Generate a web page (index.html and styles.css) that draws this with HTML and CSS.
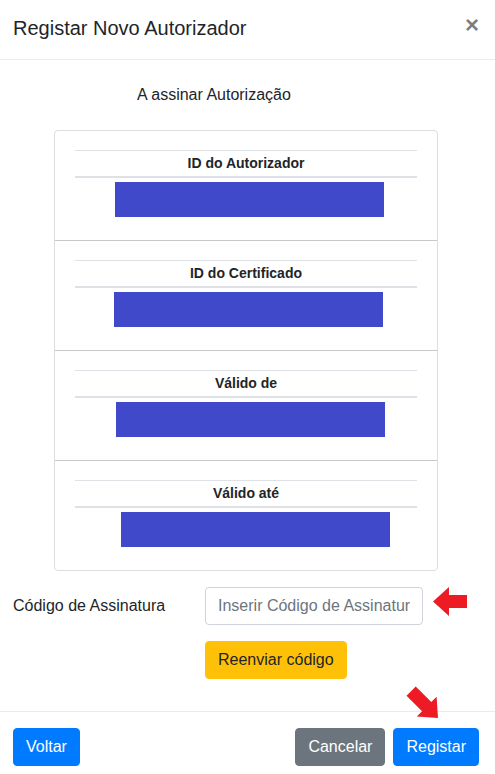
FILE: index.html
```html
<!DOCTYPE html>
<html lang="pt">
<head>
<meta charset="utf-8">
<title>Registar Novo Autorizador</title>
<link rel="stylesheet" href="styles.css">
</head>
<body>
<div class="modal">
  <header class="modal-header">
    <h5 class="modal-title">Registar Novo Autorizador</h5>
    <button class="close" type="button" aria-label="Fechar">×</button>
  </header>
  <div class="modal-body">
    <p class="subtitle">A assinar Autorização</p>
    <div class="card">
      <section class="card-section">
        <div class="field-label">ID do Autorizador</div>
        <div class="field-value"><div class="redact redact-1"></div></div>
      </section>
      <section class="card-section">
        <div class="field-label">ID do Certificado</div>
        <div class="field-value"><div class="redact redact-2"></div></div>
      </section>
      <section class="card-section">
        <div class="field-label">Válido de</div>
        <div class="field-value"><div class="redact redact-3"></div></div>
      </section>
      <section class="card-section">
        <div class="field-label">Válido até</div>
        <div class="field-value"><div class="redact redact-4"></div></div>
      </section>
    </div>
    <div class="form-row">
      <label class="form-label" for="code">Código de Assinatura</label>
      <input class="form-control" id="code" type="text" placeholder="Inserir Código de Assinatura">
    </div>
    <div class="resend-row">
      <button class="btn btn-warning" type="button">Reenviar código</button>
    </div>
  </div>
  <footer class="modal-footer">
    <button class="btn btn-primary" type="button">Voltar</button>
    <div class="footer-right">
      <button class="btn btn-secondary" type="button">Cancelar</button>
      <button class="btn btn-primary" type="button">Registar</button>
    </div>
  </footer>
  <svg class="arrow arrow-left" viewBox="428 584 42 34" width="42" height="34" aria-hidden="true">
    <polygon points="433,601.5 449,587 449,595 467,595 467,608 449,608 449,616" fill="#ed1c24"/>
  </svg>
  <svg class="arrow arrow-diag" viewBox="400 680 45 45" width="45" height="45" aria-hidden="true">
    <polygon points="415.7,686.5 431.3,702.1 436.6,696.8 438,718 416.8,716.6 422.1,711.3 406.5,695.7" fill="#ed1c24"/>
  </svg>
</div>
</body>
</html>
```

FILE: styles.css
```css
html, body {
  margin: 0;
  padding: 0;
  overflow: hidden;
  background: #fff;
}

body {
  font-family: "Liberation Sans", Arial, sans-serif;
  font-size: 16px;
  line-height: 24px;
  color: #212529;
}

.modal {
  position: relative;
  width: 495px;
  background: #fff;
}

.modal-header {
  display: flex;
  align-items: flex-start;
  padding: 13px 16px 16px 13px;
  border-bottom: 1px solid #e9ecef;
}

.modal-title {
  margin: 0;
  font-size: 20px;
  font-weight: 400;
  line-height: 30px;
  color: #212529;
}

.close {
  margin-left: auto;
  padding: 0;
  border: 0;
  background: transparent;
  font-family: "Liberation Sans", Arial, sans-serif;
  font-size: 24px;
  font-weight: 700;
  line-height: 1;
  color: #000;
  opacity: 0.5;
  text-shadow: 0 1px 0 #fff;
  cursor: pointer;
}

.modal-body {
  padding: 16px 16px 32px 13px;
}

.subtitle {
  margin: 0 0 23px;
  padding: 7px 0 0 124px;
  line-height: 24px;
}

.card {
  width: 382px;
  margin: 0 auto;
  border: 1px solid #dddddd;
  border-radius: 4px;
}

.card-section {
  padding: 19px 20px 20px;
  border-bottom: 1px solid #c9c9c9;
}

.card-section:last-child {
  border-bottom: 0;
}

.field-label {
  padding: 4px 0;
  border-top: 1px solid #dee2e6;
  border-bottom: 2px solid #dee2e6;
  font-size: 14px;
  font-weight: 700;
  line-height: 17px;
  text-align: center;
  color: #212529;
}

.field-value {
  padding: 4px 0 3px;
}

.redact {
  width: 269px;
  height: 35px;
  background: #4149cb;
}

.redact-1 { margin-left: 40px; }
.redact-2 { margin-left: 39px; }
.redact-3 { margin-left: 41px; }
.redact-4 { margin-left: 46px; }

.form-row {
  display: grid;
  grid-template-columns: 192px 218px;
  align-items: center;
  margin-top: 16px;
}

.form-label {
  font-size: 16px;
  line-height: 24px;
}

.form-control {
  box-sizing: border-box;
  width: 218px;
  height: 38px;
  padding: 6px 12px;
  border: 1px solid #ced4da;
  border-radius: 4px;
  font-family: "Liberation Sans", Arial, sans-serif;
  font-size: 16px;
  line-height: 24px;
  color: #495057;
  background: #fff;
}

.form-control::placeholder {
  color: #6c757d;
  opacity: 1;
}

.resend-row {
  margin-top: 16px;
  padding-left: 192px;
}

.btn {
  display: inline-block;
  box-sizing: border-box;
  height: 38px;
  margin: 0;
  padding: 6px 12px;
  border: 1px solid transparent;
  border-radius: 4px;
  font-family: "Liberation Sans", Arial, sans-serif;
  font-size: 16px;
  line-height: 24px;
  cursor: pointer;
}

.btn-primary {
  background: #007bff;
  border-color: #007bff;
  color: #fff;
}

.btn-secondary {
  background: #6c757d;
  border-color: #6c757d;
  color: #fff;
}

.btn-warning {
  background: #ffc107;
  border-color: #ffc107;
  color: #212529;
}

.modal-footer {
  display: flex;
  align-items: center;
  padding: 12px 12px 12px 9px;
  border-top: 1px solid #e9ecef;
}

.modal-footer .btn {
  margin: 4px;
}

.footer-right {
  display: flex;
  margin-left: auto;
}

.arrow {
  position: absolute;
  display: block;
}

.arrow-left {
  left: 428px;
  top: 584px;
}

.arrow-diag {
  left: 400px;
  top: 680px;
}
```
